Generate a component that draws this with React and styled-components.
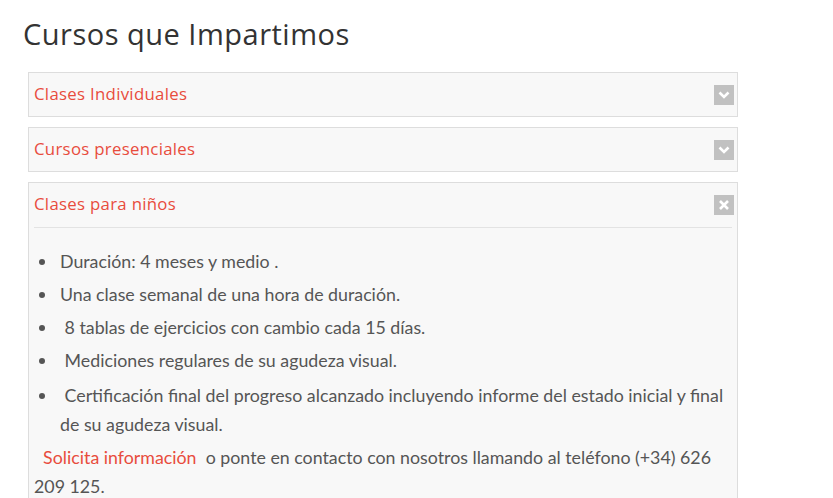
import React, { useState } from "react"
import styled, { createGlobalStyle } from "styled-components"

const GlobalStyle = createGlobalStyle`
  body {
    margin: 0;
    background: #fff;
    font-family: "Lato", "Open Sans", sans-serif;
  }
`

const Page = styled.div`
  padding: 14px 0 0 23px;
`

const Title = styled.h2`
  margin: 0 0 18px 0;
  font-family: "Open Sans", "Lato", sans-serif;
  font-weight: 400;
  font-size: 29px;
  line-height: 40px;
  color: #333;
  letter-spacing: 0.5px;
`

const Accordion = styled.div`
  margin-left: 5px;
  width: 710px;
  display: flex;
  flex-direction: column;
  gap: 10px;
`

const Panel = styled.div`
  background: #f8f8f8;
  border: 1px solid #dddddd;
  padding: 0 5px;
`

const Header = styled.div`
  height: ${p => (p.open ? "44px" : "43px")};
  display: flex;
  align-items: center;
  justify-content: space-between;
  cursor: pointer;
  border-bottom: ${p => (p.open ? "1px solid #e3e3e3" : "none")};
`

const HeaderText = styled.span`
  font-family: "Open Sans", "Lato", sans-serif;
  font-size: 16.8px;
  color: #e84c3d;
  letter-spacing: 0.3px;
  margin-top: ${p => (p.open ? "-4px" : "-3px")};
`

const IconBox = styled.span`
  width: 20px;
  height: 20px;
  background: #c1c1c1;
  display: flex;
  align-items: center;
  justify-content: center;
  margin-right: -2px;
  margin-top: ${p => (p.open ? "0" : "1px")};
`

const Body = styled.div`
  padding: 19px 0 0 0;
  font-size: 17.8px;
  color: #555;
`

const List = styled.ul`
  margin: 0;
  padding: 0 0 0 26px;
  list-style: none;
`

const Item = styled.li`
  position: relative;
  line-height: 29px;
  margin-bottom: ${p => (p.gap ? "6px" : "4px")};
  padding-right: 4px;
  &::before {
    content: "";
    position: absolute;
    left: -21px;
    top: 12px;
    width: 6px;
    height: 6px;
    border-radius: 50%;
    background: #555;
  }
`

const Para = styled.p`
  margin: 0;
  line-height: 29px;
  padding-right: 4px;
`

const Link = styled.a`
  color: #e84c3d;
  text-decoration: none;
`

const Chevron = () => (
  <svg width="12" height="8" viewBox="0 0 12 8">
    <path d="M1.5 1.5 L6 6 L10.5 1.5" stroke="#fff" strokeWidth="2.6" fill="none" />
  </svg>
)

const Cross = () => (
  <svg width="10" height="10" viewBox="0 0 10 10">
    <path d="M1 1 L9 9 M9 1 L1 9" stroke="#fff" strokeWidth="2.6" fill="none" />
  </svg>
)

const sections = [
  { title: "Clases Individuales" },
  { title: "Cursos presenciales" },
  { title: "Clases para niños" },
]

export default function App() {
  const [open, setOpen] = useState(2)

  return (
    <Page>
      <GlobalStyle />
      <Title>Cursos que Impartimos</Title>
      <Accordion>
        {sections.map((s, i) => (
          <Panel key={s.title}>
            <Header open={open === i} onClick={() => setOpen(open === i ? -1 : i)}>
              <HeaderText open={open === i}>{s.title}</HeaderText>
              <IconBox open={open === i}>{open === i ? <Cross /> : <Chevron />}</IconBox>
            </Header>
            {open === i && (
              <Body>
                <List>
                  <Item>Duración: 4 meses y medio .</Item>
                  <Item>Una clase semanal de una hora de duración.</Item>
                  <Item>&nbsp;8 tablas de ejercicios con cambio cada 15 días.</Item>
                  <Item gap>&nbsp;Mediciones regulares de su agudeza visual.</Item>
                  <Item>&nbsp;Certificación final del progreso alcanzado incluyendo informe del estado inicial y final de su agudeza visual.</Item>
                </List>
                <Para>
                  &nbsp;&nbsp;<Link href="#">Solicita información</Link>&nbsp; o ponte en contacto con nosotros llamando al teléfono (+34) 626 209 125.
                </Para>
              </Body>
            )}
          </Panel>
        ))}
      </Accordion>
    </Page>
  )
}
